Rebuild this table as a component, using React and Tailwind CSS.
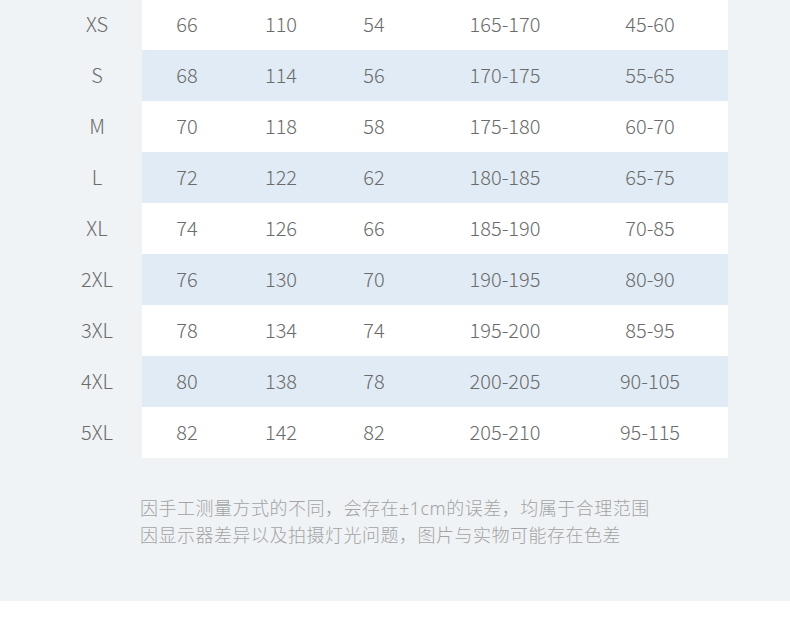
import React from 'react';

const rows = [
    ['XS', '66', '110', '54', '165-170', '45-60'],
    ['S', '68', '114', '56', '170-175', '55-65'],
    ['M', '70', '118', '58', '175-180', '60-70'],
    ['L', '72', '122', '62', '180-185', '65-75'],
    ['XL', '74', '126', '66', '185-190', '70-85'],
    ['2XL', '76', '130', '70', '190-195', '80-90'],
    ['3XL', '78', '134', '74', '195-200', '85-95'],
    ['4XL', '80', '138', '78', '200-205', '90-105'],
    ['5XL', '82', '142', '82', '205-210', '95-115'],
];

const font = { fontFamily: '"Noto Sans CJK SC Light", "Noto Sans CJK SC", "Noto Sans", sans-serif' };

const SizeRow = ({ row, index }) => {
    const [size, ...cells] = row;
    const striped = index % 2 === 1;
    return (
        <div className={`flex items-center pb-[2px] ${index === 0 ? 'h-[50px]' : 'h-[51px]'}`}>
            <div className="w-[142px] flex items-center">
                <span className="ml-[52px] w-[90px] text-center">{size}</span>
            </div>
            <div className={`flex self-stretch -mb-[2px] w-[586px] items-center pb-[2px] ${striped ? 'bg-[#e1ebf5]' : 'bg-white'}`}>
                <span className="w-[90px] text-center">{cells[0]}</span>
                <span className="w-[98px] text-center">{cells[1]}</span>
                <span className="w-[88px] text-center">{cells[2]}</span>
                <span className="w-[174px] text-center">{cells[3]}</span>
                <span className="w-[116px] text-center">{cells[4]}</span>
            </div>
        </div>
    );
};

export default function App() {
    return (
        <div className="w-[790px] bg-white" style={font}>
            <div className="bg-[#eff3f6] h-[601px] text-[20px] font-light text-[#6b6b6b]">
                {rows.map((row, i) => <SizeRow key={row[0]} row={row} index={i} />)}

                {/* note */}
                <div className="ml-[140px] mt-[36px] text-[18px] leading-[26px] tracking-[0.5px] text-[#a3a3a3] font-light">
                    <p>因手工测量方式的不同，会存在<span style={{ fontFamily: '"Noto Sans", sans-serif' }} className="tracking-[0.5px]">±1cm</span>的误差，均属于合理范围</p>
                    <p>因显示器差异以及拍摄灯光问题，图片与实物可能存在色差</p>
                </div>
            </div>
            <div className="h-[38px]" />
        </div>
    );
}
